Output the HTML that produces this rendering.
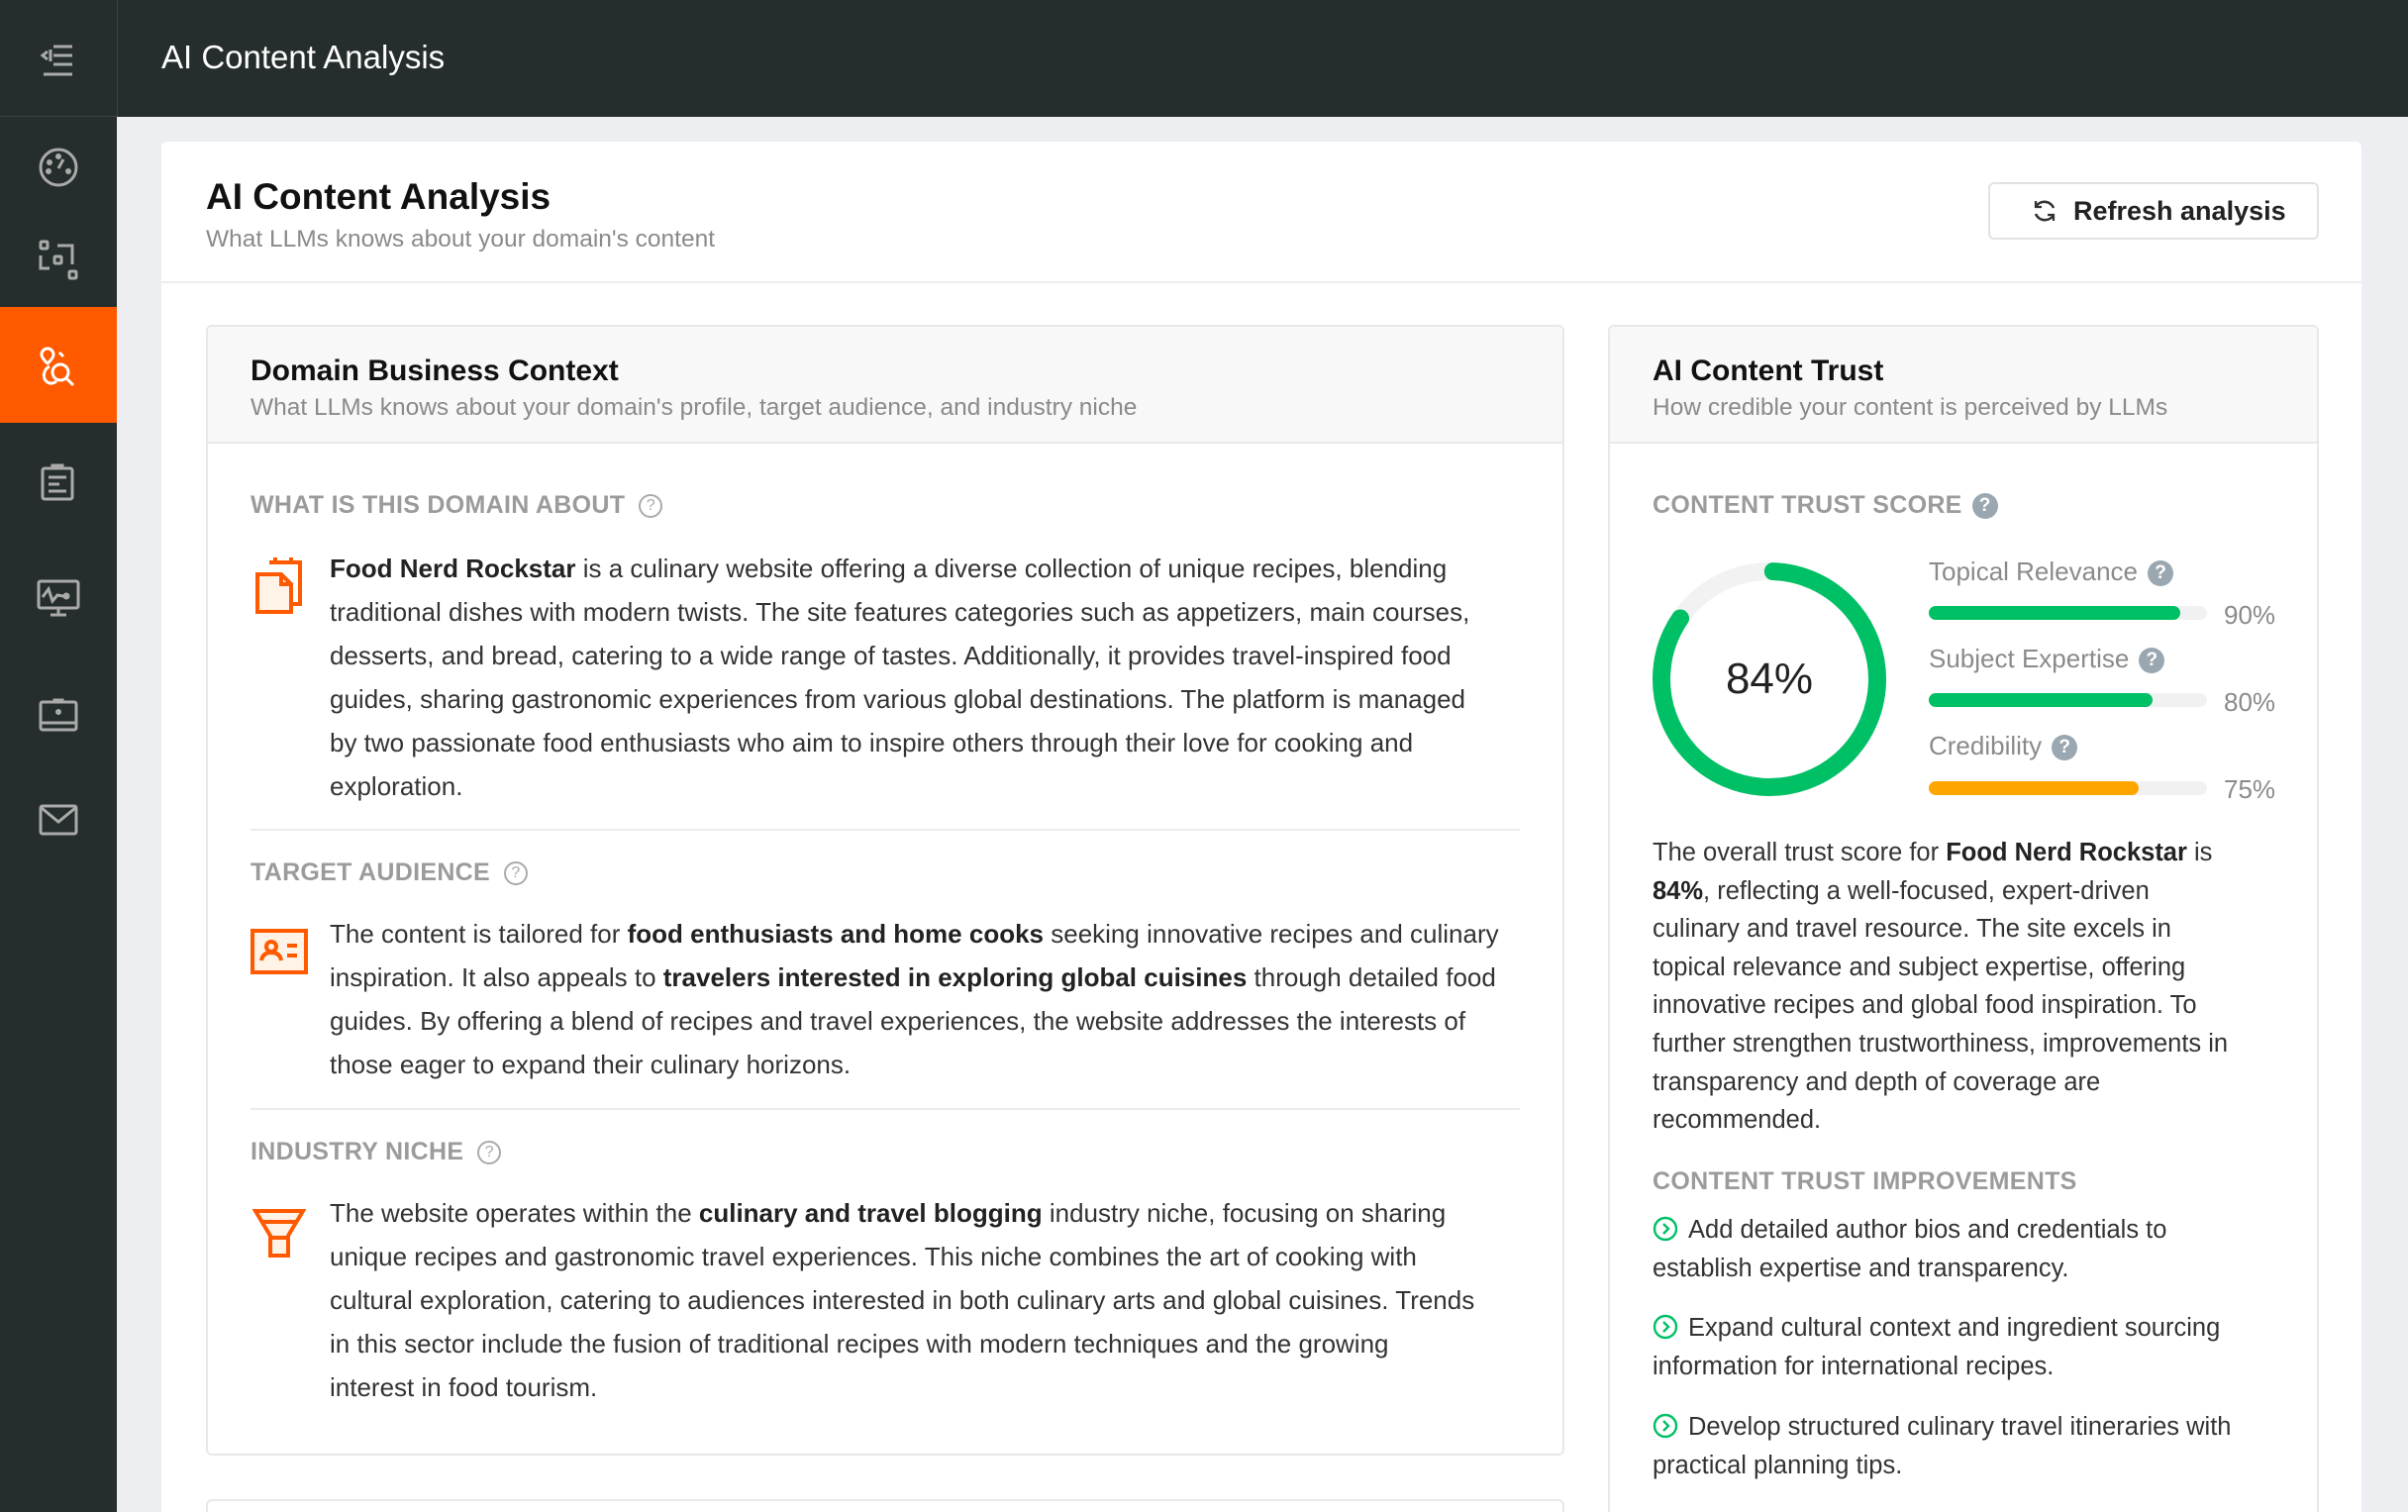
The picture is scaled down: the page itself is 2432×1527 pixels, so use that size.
<!DOCTYPE html>
<html><head><meta charset="utf-8"><style>
*{margin:0;padding:0;box-sizing:border-box}
html{width:2432px;height:1527px;overflow:hidden}
body{width:2432px;height:1527px;overflow:hidden;background:#eceef2;font-family:"Liberation Sans",Arial,sans-serif;color:#333;position:relative}
.a{position:absolute}
.side{left:0;top:0;width:118px;height:1527px;background:#262d2d}
.top{left:118px;top:0;width:2314px;height:118px;background:#262d2d;border-left:1px solid #3a4242}
.card{left:163px;top:143px;width:2222px;height:1384px;background:#fff;border-radius:6px 6px 0 0}
.panel{background:#fff;border:2px solid #e6e8ea;border-radius:6px}
.ph{background:#f8f8f8;border-bottom:2px solid #e8e8e8}
.sec{font-size:25px;font-weight:bold;color:#9b9b9b;letter-spacing:0.3px}
.p{font-size:26px;line-height:44px;color:#333;white-space:nowrap}
.p b{font-weight:bold;color:#222}
.q{font-size:25.5px;line-height:38.6px;color:#333;white-space:nowrap}
.q b{color:#222}
.lbl{font-size:26px;color:#8a8a8a}
.pct{font-size:26px;color:#8a8a8a}
.bar{height:14px;border-radius:7px;background:#f1f1f1;width:281px}
.bar i{display:block;height:14px;border-radius:7px}
.qm{display:inline-block;width:26px;height:26px;border-radius:50%;background:#9aa7b0;color:#fff;font-size:19px;font-weight:bold;text-align:center;line-height:26px;vertical-align:2px;margin-left:10px}
.qo{display:inline-block;width:24px;height:24px;border-radius:50%;border:2px solid #aaa;color:#aaa;font-size:16px;text-align:center;line-height:20px;vertical-align:3px;margin-left:14px;font-weight:normal}
.div{height:2px;background:#ececec}
</style></head><body>
<div class="a side"></div>
<div class="a" style="left:0;top:117px;width:118px;height:1px;background:#3a4242"></div>
<div class="a top"></div>
<svg class="a" style="left:40px;top:44px" width="36" height="34" viewBox="0 0 36 34" fill="none" stroke="#aaa" stroke-width="3"><path d="M14 3H33M14 12H33M14 21H33M4 31H33M8 8L3 12L8 16"/><path d="M11 6V18"/></svg>
<div class="a" style="left:163px;top:39px;font-size:33px;color:#fff">AI Content Analysis</div>
<svg class="a" style="left:38px;top:148px" width="42" height="42" viewBox="0 0 42 42" fill="none" stroke="#aaa" stroke-width="3"><circle cx="21" cy="21" r="18"/><path d="M21 22L26 13"/><circle cx="12" cy="16" r="1.5" fill="#aaa"/><circle cx="21" cy="10" r="1.5" fill="#aaa"/><circle cx="11" cy="25" r="1.5" fill="#aaa"/><circle cx="31" cy="25" r="1.5" fill="#aaa"/></svg>
<svg class="a" style="left:38px;top:242px" width="42" height="42" viewBox="0 0 42 42" fill="none" stroke="#aaa" stroke-width="3"><rect x="3" y="2" width="7" height="7" rx="1"/><rect x="17" y="17" width="7" height="7" rx="1"/><rect x="32" y="32" width="7" height="7" rx="1"/><path d="M3 16V29H12M20 6H35V25"/></svg>
<div class="a" style="left:0;top:310px;width:118px;height:117px;background:#ff5a00"></div>
<svg class="a" style="left:38px;top:350px" width="42" height="42" viewBox="0 0 42 42" fill="none" stroke="#fff" stroke-width="3"><path d="M10 2a6 6 0 0 1 6 6c0 4-6 9-6 9s-6-5-6-9a6 6 0 0 1 6-6z"/><circle cx="23" cy="26" r="8"/><path d="M29 32L36 39M12 20c-6 3-8 12-2 16 3 2 7 1 9-1M22 6l4 4"/></svg>
<svg class="a" style="left:40px;top:468px" width="36" height="38" viewBox="0 0 36 38" fill="none" stroke="#aaa" stroke-width="3"><rect x="3" y="5" width="30" height="31" rx="2"/><path d="M13 5V2H23V5M9 14H27M9 21H20M9 28H27"/></svg>
<svg class="a" style="left:37px;top:585px" width="44" height="40" viewBox="0 0 44 40" fill="none" stroke="#aaa" stroke-width="3"><rect x="2" y="2" width="40" height="27" rx="2"/><path d="M6 18L12 10L16 22L21 16L27 17M22 35V29M14 36H30"/><circle cx="30" cy="17" r="2" fill="#aaa"/></svg>
<svg class="a" style="left:39px;top:705px" width="40" height="34" viewBox="0 0 40 34" fill="none" stroke="#aaa" stroke-width="3"><rect x="2" y="4" width="36" height="28" rx="2"/><path d="M2 25H38M16 4V2H24V4"/><circle cx="20" cy="14" r="1.5" fill="#aaa"/></svg>
<svg class="a" style="left:39px;top:812px" width="40" height="32" viewBox="0 0 40 32" fill="none" stroke="#aaa" stroke-width="3"><rect x="2" y="2" width="36" height="28" rx="2"/><path d="M3 4L20 18L37 4"/></svg>

<div class="a card"></div>
<div class="a" style="left:208px;top:178px;font-size:37px;font-weight:bold;color:#111">AI Content Analysis</div>
<div class="a" style="left:208px;top:228px;font-size:24.5px;color:#8a8a8a">What LLMs knows about your domain's content</div>
<div class="a" style="left:163px;top:284px;width:2222px;height:2px;background:#eceeee"></div>
<div class="a" style="left:2008px;top:184px;width:334px;height:58px;border:2px solid #e2e2e2;border-radius:6px;background:#fff"></div>
<svg class="a" style="left:2052px;top:200px" width="26" height="26" viewBox="0 0 26 26" fill="none" stroke="#333" stroke-width="2.6"><path d="M22 10A10 10 0 0 0 4 9M4 16a10 10 0 0 0 18 1"/><path d="M4 3V9H10M22 23V17H16" stroke-width="2.2"/></svg>
<div class="a" style="left:2094px;top:198px;font-size:27px;font-weight:bold;color:#222">Refresh analysis</div>

<div class="a panel" style="left:208px;top:328px;width:1372px;height:1142px"></div>
<div class="a ph" style="left:210px;top:330px;width:1368px;height:118px;border-radius:5px 5px 0 0"></div>
<div class="a" style="left:253px;top:358px;font-size:30px;font-weight:bold;color:#111">Domain Business Context</div>
<div class="a" style="left:253px;top:398px;font-size:24.5px;color:#8a8a8a">What LLMs knows about your domain's profile, target audience, and industry niche</div>

<div class="a sec" style="left:253px;top:496px">WHAT IS THIS DOMAIN ABOUT<span class="qo">?</span></div>
<svg class="a" style="left:258px;top:560px" width="48" height="62" viewBox="0 0 48 62" fill="none" stroke="#ff5a00" stroke-width="4"><path d="M14 8H45V50H36" /><path d="M20 3V10M36 3V10"/><path d="M2 20H26L36 30V58H2Z" fill="#fff2e6"/><path d="M26 20V30H36"/></svg>
<div class="a p" style="left:333px;top:552px"><b>Food Nerd Rockstar</b> is a culinary website offering a diverse collection of unique recipes, blending<br>traditional dishes with modern twists. The site features categories such as appetizers, main courses,<br>desserts, and bread, catering to a wide range of tastes. Additionally, it provides travel-inspired food<br>guides, sharing gastronomic experiences from various global destinations. The platform is managed<br>by two passionate food enthusiasts who aim to inspire others through their love for cooking and<br>exploration.</div>
<div class="a div" style="left:253px;top:837px;width:1282px"></div>

<div class="a sec" style="left:253px;top:867px">TARGET AUDIENCE<span class="qo">?</span></div>
<svg class="a" style="left:252px;top:937px" width="60" height="48" viewBox="0 0 60 48" fill="none" stroke="#ff5a00" stroke-width="4"><rect x="3" y="3" width="54" height="42" fill="#fff2e6"/><circle cx="22" cy="19" r="5"/><path d="M12 33c1-6 5-8 10-8s9 2 10 8M38 18H48M38 28H48"/></svg>
<div class="a p" style="left:333px;top:921px">The content is tailored for <b>food enthusiasts and home cooks</b> seeking innovative recipes and culinary<br>inspiration. It also appeals to <b>travelers interested in exploring global cuisines</b> through detailed food<br>guides. By offering a blend of recipes and travel experiences, the website addresses the interests of<br>those eager to expand their culinary horizons.</div>
<div class="a div" style="left:253px;top:1119px;width:1282px"></div>

<div class="a sec" style="left:253px;top:1149px">INDUSTRY NICHE<span class="qo">?</span></div>
<svg class="a" style="left:255px;top:1220px" width="54" height="52" viewBox="0 0 54 52" fill="none" stroke="#ff5a00" stroke-width="4"><path d="M3 3H51L36 28V48H18V28Z" fill="#fff2e6"/><path d="M10 14H44M18 30H36"/></svg>
<div class="a p" style="left:333px;top:1203px">The website operates within the <b>culinary and travel blogging</b> industry niche, focusing on sharing<br>unique recipes and gastronomic travel experiences. This niche combines the art of cooking with<br>cultural exploration, catering to audiences interested in both culinary arts and global cuisines. Trends<br>in this sector include the fusion of traditional recipes with modern techniques and the growing<br>interest in food tourism.</div>

<div class="a panel" style="left:208px;top:1514px;width:1372px;height:13px;border-bottom:none;border-radius:6px 6px 0 0"></div>

<div class="a panel" style="left:1624px;top:328px;width:718px;height:1199px;border-bottom:none;border-radius:6px 6px 0 0"></div>
<div class="a ph" style="left:1626px;top:330px;width:714px;height:118px;border-radius:5px 5px 0 0"></div>
<div class="a" style="left:1669px;top:358px;font-size:30px;font-weight:bold;color:#111">AI Content Trust</div>
<div class="a" style="left:1669px;top:398px;font-size:24.5px;color:#8a8a8a">How credible your content is perceived by LLMs</div>

<div class="a sec" style="left:1669px;top:496px">CONTENT TRUST SCORE<span class="qm">?</span></div>
<svg class="a" style="left:1667px;top:566px" width="240" height="240" viewBox="0 0 240 240"><circle cx="120" cy="120" r="109" fill="none" stroke="#f2f2f2" stroke-width="18"/><circle cx="120" cy="120" r="109" fill="none" stroke="#00c065" stroke-width="18" stroke-linecap="round" stroke-dasharray="575 700" transform="rotate(-88 120 120)"/><text x="120" y="134" text-anchor="middle" font-family="Liberation Sans" font-size="44" fill="#222">84%</text></svg>

<div class="a lbl" style="left:1948px;top:562px">Topical Relevance<span class="qm">?</span></div>
<div class="a bar" style="left:1948px;top:612px"><i style="width:254px;background:#00c065"></i></div>
<div class="a pct" style="left:2246px;top:606px">90%</div>
<div class="a lbl" style="left:1948px;top:650px">Subject Expertise<span class="qm">?</span></div>
<div class="a bar" style="left:1948px;top:700px"><i style="width:226px;background:#00c065"></i></div>
<div class="a pct" style="left:2246px;top:694px">80%</div>
<div class="a lbl" style="left:1948px;top:738px">Credibility<span class="qm">?</span></div>
<div class="a bar" style="left:1948px;top:789px"><i style="width:212px;background:#ffa500"></i></div>
<div class="a pct" style="left:2246px;top:782px">75%</div>

<div class="a q" style="left:1669px;top:842px">The overall trust score for <b>Food Nerd Rockstar</b> is<br><b>84%</b>, reflecting a well-focused, expert-driven<br>culinary and travel resource. The site excels in<br>topical relevance and subject expertise, offering<br>innovative recipes and global food inspiration. To<br>further strengthen trustworthiness, improvements in<br>transparency and depth of coverage are<br>recommended.</div>

<div class="a sec" style="left:1669px;top:1179px">CONTENT TRUST IMPROVEMENTS</div>
<div class="a q" style="left:1669px;top:1223px"><svg width="26" height="26" viewBox="0 0 26 26" style="vertical-align:-4px;margin-right:10px" fill="none" stroke="#00c065" stroke-width="2.4"><circle cx="13" cy="13" r="11"/><path d="M11 8L16 13L11 18"/></svg>Add detailed author bios and credentials to<br>establish expertise and transparency.</div>
<div class="a q" style="left:1669px;top:1322px"><svg width="26" height="26" viewBox="0 0 26 26" style="vertical-align:-4px;margin-right:10px" fill="none" stroke="#00c065" stroke-width="2.4"><circle cx="13" cy="13" r="11"/><path d="M11 8L16 13L11 18"/></svg>Expand cultural context and ingredient sourcing<br>information for international recipes.</div>
<div class="a q" style="left:1669px;top:1422px"><svg width="26" height="26" viewBox="0 0 26 26" style="vertical-align:-4px;margin-right:10px" fill="none" stroke="#00c065" stroke-width="2.4"><circle cx="13" cy="13" r="11"/><path d="M11 8L16 13L11 18"/></svg>Develop structured culinary travel itineraries with<br>practical planning tips.</div>
</body></html>
